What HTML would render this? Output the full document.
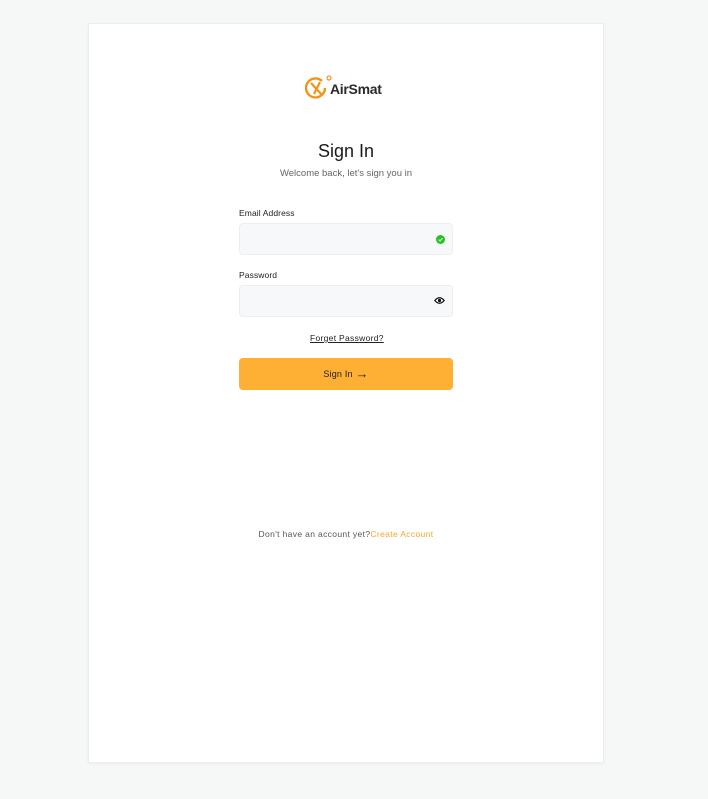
<!DOCTYPE html>
<html><head><meta charset="utf-8"><style>
*{box-sizing:border-box;margin:0;padding:0}
body{width:708px;height:799px;background:#f6f7f7;font-family:"Liberation Sans",sans-serif;position:relative;overflow:hidden}
.card{position:absolute;left:88px;top:23px;width:516px;height:740px;background:#fff;border:1px solid #eceded;box-shadow:0 1px 3px rgba(0,0,0,.04)}
.abs{position:absolute}
.lbl{font-size:8.5px;color:#222;letter-spacing:0.1px}
.inp{position:absolute;left:239px;width:214px;height:32px;background:#f7f8fa;border:1px solid #eceef1;border-radius:4px}
</style></head><body>
<div class="card"></div>
<svg class="abs" style="left:305px;top:75px" width="28" height="26" viewBox="0 0 28 26">
<path d="M17 6 A9.5 9.5 0 1 0 20 13" fill="none" stroke="#f39419" stroke-width="2.4"/>
<path d="M6 8 L17 20 M15 7 L9 19" stroke="#f39419" stroke-width="2.2" fill="none"/>
<circle cx="24" cy="3" r="2" fill="none" stroke="#f39419" stroke-width="1.2"/>
</svg>
<div class="abs" style="left:330px;top:81px;font-size:14px;font-weight:bold;color:#2a2a2a;letter-spacing:-0.3px">AirSmat</div>
<div class="abs" style="left:0;width:692px;top:141px;text-align:center;font-size:18px;color:#1a1a1a">Sign In</div>
<div class="abs" style="left:0;width:692px;top:168px;text-align:center;font-size:9.5px;color:#666">Welcome back, let's sign you in</div>
<div class="abs lbl" style="left:239px;top:208px">Email Address</div>
<div class="inp" style="top:223px"></div>
<svg class="abs" style="left:436px;top:235px" width="9" height="9" viewBox="0 0 9 9"><circle cx="4.5" cy="4.5" r="4.5" fill="#22c31f"/><path d="M2.6 4.6 L4 6 L6.5 3.2" stroke="#fff" stroke-width="1" fill="none"/></svg>
<div class="abs lbl" style="left:239px;top:270px">Password</div>
<div class="inp" style="top:285px"></div>
<svg class="abs" style="left:434px;top:296px" width="11" height="9" viewBox="0 0 11 9"><path d="M0.8 4.5 Q5.5 -1 10.2 4.5 Q5.5 10 0.8 4.5Z" fill="none" stroke="#111" stroke-width="1.2"/><circle cx="5.5" cy="4.5" r="1.6" fill="#111"/></svg>
<div class="abs" style="left:310px;top:333px;font-size:8.5px;color:#222;text-decoration:underline;letter-spacing:0.3px">Forget Password?</div>
<div class="abs" style="left:239px;top:358px;width:214px;height:32px;background:#fdb034;border-radius:4px;font-size:9px;color:#222;text-align:center;line-height:32px;letter-spacing:0.2px">Sign In <span style="font-size:13px;vertical-align:-1px">&#8594;</span></div>
<div class="abs" style="left:0;width:692px;top:529px;text-align:center;font-size:8.5px;color:#555;letter-spacing:0.35px">Don't have an account yet?<span style="color:#f5a623">Create Account</span></div>
</body></html>
